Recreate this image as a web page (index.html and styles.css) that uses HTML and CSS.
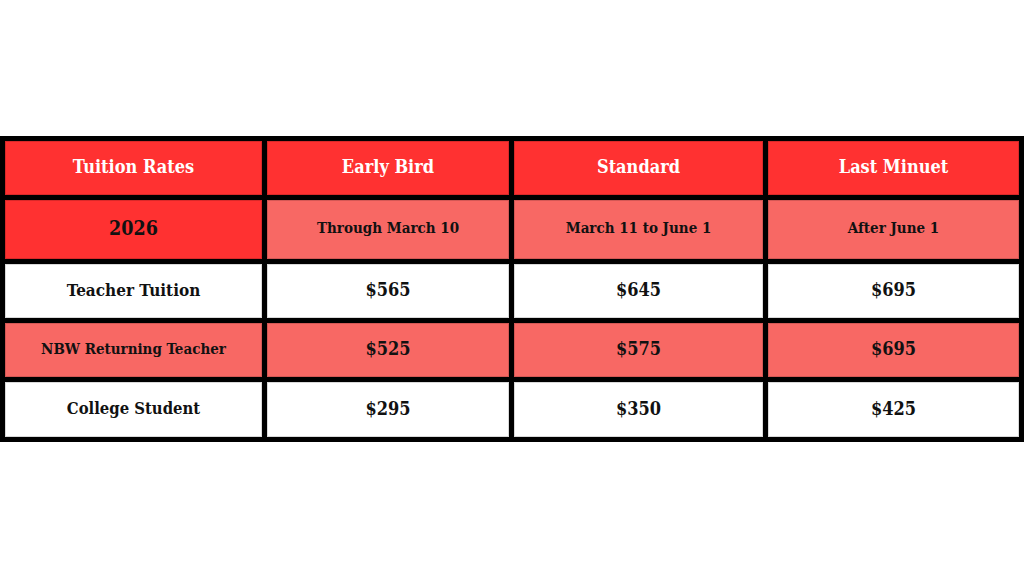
FILE: index.html
```html
<!DOCTYPE html>
<html lang="en">
<head>
<meta charset="utf-8">
<title>Tuition Rates</title>
<link rel="stylesheet" href="styles.css">
</head>
<body>
<div class="page">
  <div class="rates">
    <div class="cell head">Tuition Rates</div>
    <div class="cell head">Early Bird</div>
    <div class="cell head">Standard</div>
    <div class="cell head">Last Minuet</div>

    <div class="cell year">2026</div>
    <div class="cell light small">Through March 10</div>
    <div class="cell light small">March 11 to June 1</div>
    <div class="cell light small">After June 1</div>

    <div class="cell white label">Teacher Tuition</div>
    <div class="cell white price">$565</div>
    <div class="cell white price">$645</div>
    <div class="cell white price">$695</div>

    <div class="cell light small">NBW Returning Teacher</div>
    <div class="cell light price">$525</div>
    <div class="cell light price">$575</div>
    <div class="cell light price">$695</div>

    <div class="cell white label label-narrow">College Student</div>
    <div class="cell white price">$295</div>
    <div class="cell white price">$350</div>
    <div class="cell white price">$425</div>
  </div>
</div>
</body>
</html>
```

FILE: styles.css
```css
html, body {
  margin: 0;
  padding: 0;
  background: #ffffff;
}

.page {
  width: 1024px;
  height: 577px;
  padding-top: 136px;
  box-sizing: border-box;
}

.rates {
  display: grid;
  grid-template-columns: 257px 242px 249px 251px;
  grid-template-rows: 54px 59px 54px 54px 55px;
  gap: 5px;
  padding: 5px;
  background: #000000;
  width: 1024px;
  box-sizing: border-box;
  font-family: "DejaVu Serif Condensed", "DejaVu Serif", "Liberation Serif", serif;
  font-stretch: condensed;
  font-weight: bold;
  color: #111111;
}

.cell {
  display: flex;
  align-items: center;
  justify-content: center;
  text-align: center;
  padding-bottom: 3px;
  box-sizing: border-box;
  box-shadow: inset 0 0 0 1px rgba(0, 0, 0, 0.15);
}

.head {
  background: #ff3131;
  color: #ffffff;
  font-size: 18px;
}

.year {
  background: #ff3131;
  font-size: 19.5px;
}

.light {
  background: #f86864;
}

.white {
  background: #ffffff;
}

.small {
  font-size: 15px;
}

.label {
  font-size: 17px;
}

.label-narrow {
  font-size: 16.5px;
}

.price {
  font-size: 18px;
}
```
